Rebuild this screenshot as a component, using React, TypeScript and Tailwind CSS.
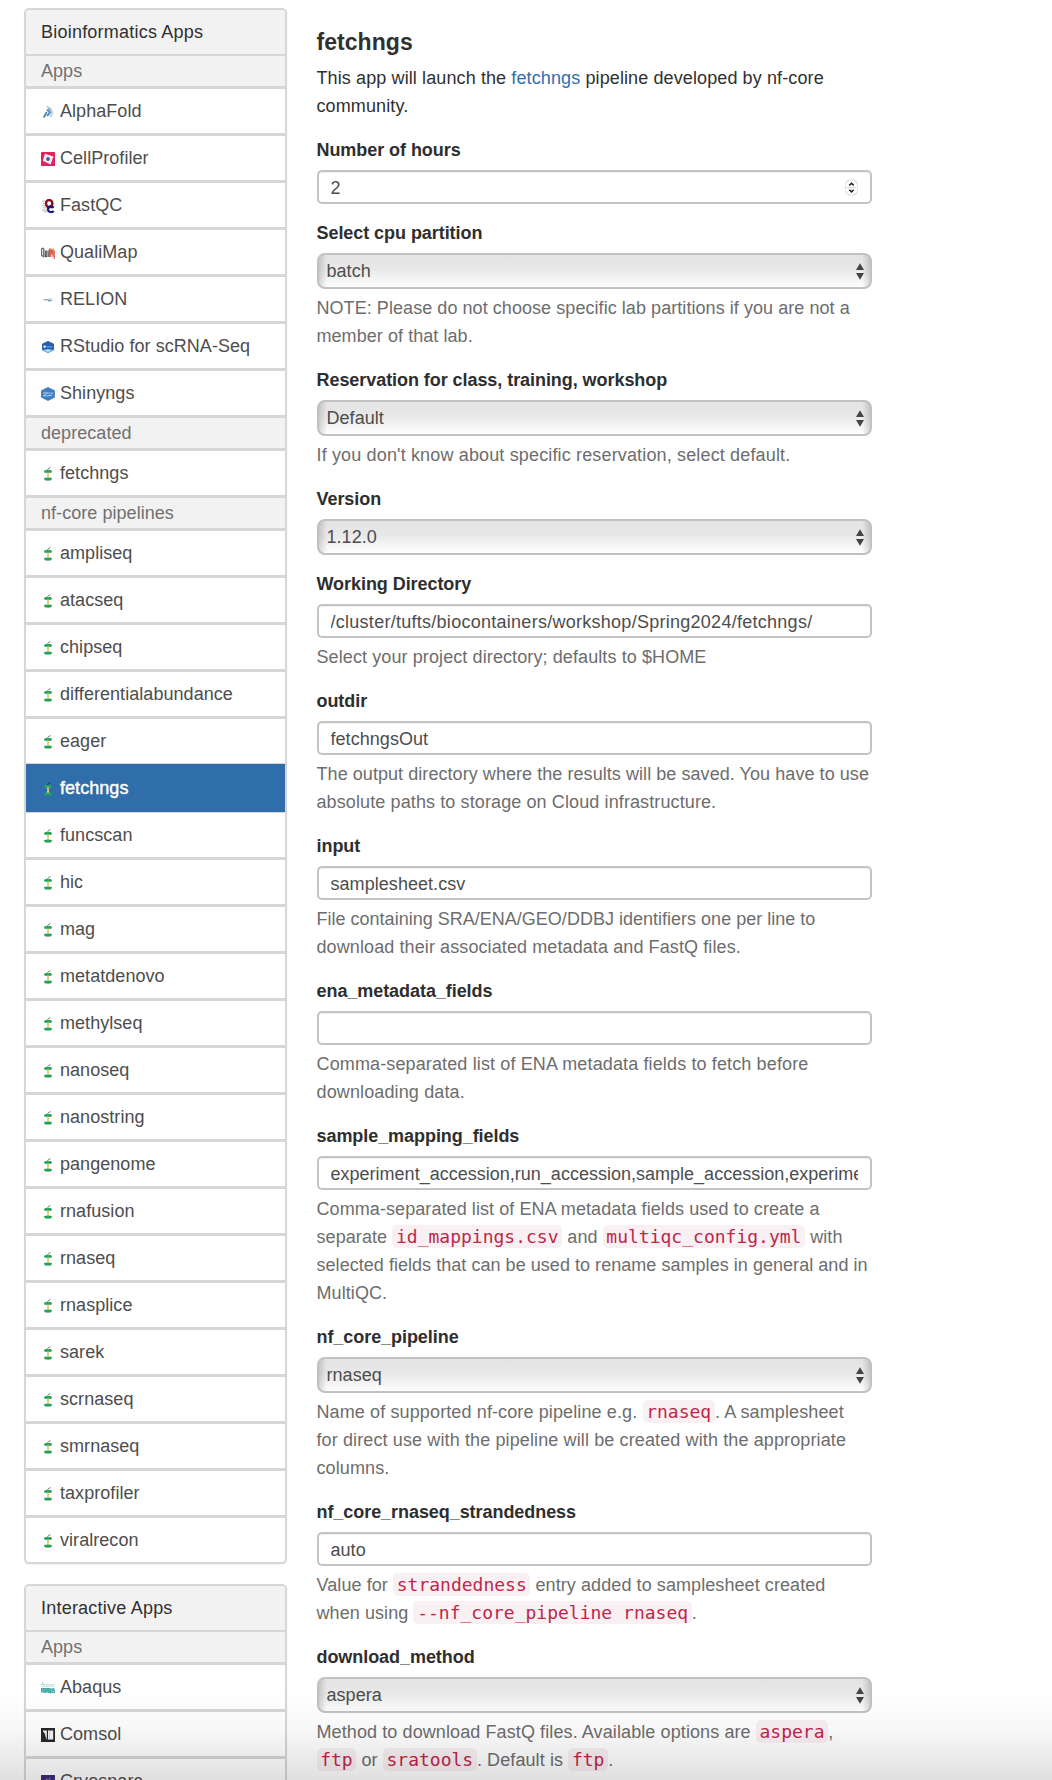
import React from "react";

type IconName =
  | "alphafold" | "cellprofiler" | "fastqc" | "qualimap" | "relion" | "rstudio"
  | "shiny" | "apple" | "abaqus" | "comsol" | "cryosparc";

function AppIcon({ name, active = false }: { name: IconName; active?: boolean }) {
  return (
    <svg viewBox="0 0 14 14" className="mt-px h-[14px] w-[14px] shrink-0">
      {name === "alphafold" && (
        <g fill="none" strokeLinecap="round">
          <path d="M6 1.5 10 4 11.5 8 9.5 11.5" stroke="#b9cfdf" strokeWidth="1.6" />
          <path d="M6.5 5 9 7.5 6.5 10.5" stroke="#5f93bd" strokeWidth="2" />
          <path d="M7.5 3.5 9.5 6" stroke="#86aeca" strokeWidth="1.4" />
          <path d="M5.5 7.5 3 12" stroke="#3f7fb2" strokeWidth="1.6" />
          <path d="M2.5 11.8 4 12.3" stroke="#9aa56a" strokeWidth="1" />
        </g>
      )}
      {name === "cellprofiler" && (
        <>
          <rect width="14" height="14" rx=".6" fill="#e0245e" />
          <path d="M4 1.8 12.4 4.4 9.6 12.4 1.8 8.8Z" fill="#f3eef4" />
          <circle cx="7" cy="7" r="1.9" fill="#5a4aa0" />
        </>
      )}
      {name === "fastqc" && (
        <g fill="none">
          <path d="M1 2.2h5M2 4.4h3M1 6.6h4M2 8.8h4M1 11h5M2.5 12.8h4" stroke="#999" strokeWidth=".7" />
          <ellipse cx="8.2" cy="4.6" rx="3.2" ry="3.6" stroke="#85131a" strokeWidth="2.4" />
          <path d="M8.6 6.4 11.6 9" stroke="#85131a" strokeWidth="1.8" />
          <path d="M12.8 8.6C10 6.6 6.6 8 7 10.6 7.3 13.2 10.8 13.8 12.8 12.2" stroke="#16168a" strokeWidth="2.2" />
        </g>
      )}
      {name === "qualimap" && (
        <g fill="none" strokeWidth="1.1">
          <path d="M.7 2.2v8M2.8 2.4v9M1 2.4h1.6M1 10h2M4.4 4.6v6.4M5.8 4.6v6.4M4.4 10.6h1.4" stroke="#555" />
          <path d="M7.2 4.5v6.5M8.4 2.4v8.6" stroke="#86675f" />
          <path d="M9.7 2.6v8.4M10.8 3.4v5M12 2.6v8.4M13.3 4.5v8.5M12.4 5h1" stroke="#d8573c" />
        </g>
      )}
      {name === "relion" && (
        <g fill="none">
          <path d="M2.5 6.7h5" stroke="#aaa" strokeWidth="1.5" />
          <path d="M7 7.6h3.5" stroke="#6f94bd" strokeWidth="1.6" />
          <path d="M7.5 6h4" stroke="#b9bfc6" strokeWidth="1" />
        </g>
      )}
      {name === "rstudio" && (
        <>
          <path d="M7 1 13 4v6.2L7 13.2 1 10.2V4Z" fill="#4aa3e6" />
          <path d="M7 1 13 4v5.4H1V4Z" fill="#2b5db0" />
          <path d="M3 10.2 7 12.2l4-2-4-1.2Z" fill="#a5dcfa" />
          <circle cx="3.6" cy="6.6" r="1.2" fill="#fff" />
          <path d="M5.6 6.8h6" stroke="#5fa2de" strokeWidth="1.3" />
        </>
      )}
      {name === "shiny" && (
        <>
          <path d="M7 0 13.9 3.6v6.8L7 14 .1 10.4V3.6Z" fill="#3f80c2" />
          <path d="M2.2 6.8 4 4.8M3.2 7.2l1.8-.2.4-2M6.4 6.8l.3-1.3M7.8 6.8l.5-1.2.9 1.1M10.2 5.6l.6 1.1 1.3-1.2M2 8.8h4.5l4.5-.6" stroke="#d5e6f5" strokeWidth=".8" fill="none" />
        </>
      )}
      {name === "apple" && (
        <>
          <path d="M6.6 3.2C6.8 1.8 7.8 1.2 9.4.7" stroke={active ? "#1f3350" : "#666"} strokeWidth="1" fill="none" />
          <path d="M3 5.1C3 3.3 4.8 2.8 7 3.3 9.2 2.8 11 3.3 11 5.1 9.8 6.4 8.6 5.8 7 6 5.4 5.8 4 6.4 3 5.1Z" fill="#27a35a" />
          <path d="M5.8 5.6h2.5L7.7 8l.7 3H5.7l.7-3Z" fill="#ecd58c" />
          <path d="M7 6.4v2.6" stroke="#a98a3c" strokeWidth=".5" />
          <path d="M3 11.3c1.2-1 2.5-.4 4-.8 1.5.4 2.8-.2 4 .8-.2 2.3-2 2.5-4 2.3-2 .2-3.8 0-4-2.3Z" fill="#27a35a" />
        </>
      )}
      {name === "abaqus" && (
        <g fill="none" stroke="#43aaa8">
          <path d="M.5 4 2 1.2M2 3.8h2M5 4h1.6M7.5 3.9h1.6M10 4h1.5M12.3 3.9h1.4" strokeWidth=".9" opacity=".75" />
          <path d="M.3 5.6h13.4" strokeWidth=".5" opacity=".5" />
          <path d="M.6 11.5V7.6h1.5v4M.6 9.6h1.5M3 7.5v4h1.3v-4ZM5.3 11.5V7.6h1.3v4M5.3 9.6h1.3M7.6 7.6v3.8h1.3V7.6ZM8.6 11l.8 1.5M9.9 7.4v4h1.3v-4M13.4 7.6h-1.2v1.8h1.2v2H12" strokeWidth="1.1" />
        </g>
      )}
      {name === "comsol" && (
        <>
          <rect width="14" height="14" fill="#282828" />
          <path d="M2 2.5h3.8v9.2C4.4 9.5 4.4 5 2 3.6Z" fill="#f5f5f5" />
          <path d="M7 2.5h5.2v9H7Z" fill="#f5f5f5" />
          <path d="M8.6 2.8v8.5" stroke="#bbb" strokeWidth=".5" />
        </>
      )}
      {name === "cryosparc" && (
        <>
          <rect width="14" height="14" fill="#3d2a78" />
          <path d="M5 4.2h1.4M8 3.4l1.2.6M6 6.2 7.6 5M9 6.5h1.2M4.6 7l1 .4" stroke="#cfc6ea" strokeWidth="1" />
        </>
      )}
    </svg>
  );
}

type Item = [label: string, icon: IconName];
type Section = { title: string; items: Item[] };

const pipelines = [
  "ampliseq", "atacseq", "chipseq", "differentialabundance", "eager", "fetchngs", "funcscan", "hic", "mag",
  "metatdenovo", "methylseq", "nanoseq", "nanostring", "pangenome", "rnafusion", "rnaseq", "rnasplice", "sarek",
  "scrnaseq", "smrnaseq", "taxprofiler", "viralrecon",
];

const bioSections: Section[] = [
  {
    title: "Apps",
    items: [
      ["AlphaFold", "alphafold"],
      ["CellProfiler", "cellprofiler"],
      ["FastQC", "fastqc"],
      ["QualiMap", "qualimap"],
      ["RELION", "relion"],
      ["RStudio for scRNA-Seq", "rstudio"],
      ["Shinyngs", "shiny"],
    ],
  },
  { title: "deprecated", items: [["fetchngs", "apple"]] },
  { title: "nf-core pipelines", items: pipelines.map((p): Item => [p, "apple"]) },
];

const interactiveSections: Section[] = [
  { title: "Apps", items: [["Abaqus", "abaqus"], ["Comsol", "comsol"], ["Cryosparc", "cryosparc"]] },
];

function Panel({ title, sections, selected }: { title: string; sections: Section[]; selected?: string }) {
  return (
    <section className="overflow-hidden rounded-[5px] border-2 border-[#d6d6d6] bg-white shadow-[0_1px_2px_rgba(0,0,0,0.06)]">
      <h2 className="h-[44px] bg-[#f2f2f2] pl-[15px] leading-[44px] tracking-[0.22px] text-[#303030]">{title}</h2>
      {sections.map((s, si) => (
        <div key={s.title}>
          <div
            className={
              "box-content h-[30px] border-[#d6d6d6] bg-[#f2f2f2] pl-[15px] leading-[30px] text-[#707070] " +
              (si === 0 ? "border-t-2" : "border-t-[3px]")
            }
          >
            {s.title}
          </div>
          {s.items.map(([label, icon]) => {
            const active = selected === `${s.title}/${label}`;
            return (
              <a
                key={label}
                className={
                  "box-content flex items-center gap-[5px] pl-[15px] leading-[44px] " +
                  (active
                    ? "relative z-10 -mb-[2px] mt-px h-[44px] border-y-2 border-[#2f6eaa] bg-[#2f6eaa] text-white [-webkit-text-stroke:0.4px_white] shadow-[0_-1px_0_#d6d6d6,0_1px_0_#d6d6d6]"
                    : "h-[44px] border-t-[3px] border-[#d6d6d6] text-[#4d4d4d]")
                }
              >
                <AppIcon name={icon} active={active} />
                {label}
              </a>
            );
          })}
        </div>
      ))}
    </section>
  );
}

type FieldProps = {
  label: string;
  help?: React.ReactNode;
  helpClass?: string;
  children: React.ReactNode;
};

function Field({ label, help, helpClass = "tracking-[0.1px]", children }: FieldProps) {
  return (
    <div className={help ? "mb-4" : "mb-[15px]"}>
      <label className="mb-[6px] block font-bold leading-[28px] tracking-[-0.06px] text-[#2e2e2e]">{label}</label>
      {children}
      {help && <p className={"mt-[5px] whitespace-nowrap leading-[28px] text-[#6d6d6d] " + helpClass}>{help}</p>}
    </div>
  );
}

type TextBoxProps = { value: string; spinner?: boolean; textClass?: string };

function TextBox({ value, spinner = false, textClass = "tracking-[0.05px]" }: TextBoxProps) {
  return (
    <div className="ml-[0.5px] flex h-[34px] w-[555px] items-center rounded-[5px] border-2 border-[#c3c3c3] bg-white pl-[11.5px] pr-[12px] leading-[30px] text-[#4d4d4d] shadow-[inset_0_1px_1px_rgba(0,0,0,0.07)]">
      <span className={"min-w-0 flex-1 overflow-hidden whitespace-nowrap pt-px " + textClass}>{value}</span>
      {spinner && (
        <span className="mr-[1px] flex h-[15px] w-[11px] items-center justify-center rounded-[5px] bg-white shadow-[0_0_1.5px_rgba(0,0,0,0.5)]">
          <svg viewBox="0 0 11 15" className="h-[15px] w-[11px]" fill="none" stroke="#222" strokeWidth="1.5">
            <path d="M3.3 5.4 5.5 3.3l2.2 2.1M3.3 9.8l2.2 2.1 2.2-2.1" />
            <path d="M.5 7.5h10" stroke="#ccc" strokeWidth=".7" />
          </svg>
        </span>
      )}
    </div>
  );
}

function SelectBox({ value }: { value: string }) {
  return (
    <div className="ml-[0.5px] flex h-[36px] w-[555px] items-center justify-between rounded-[8px] border-2 border-[#c1c1c1] bg-[linear-gradient(90deg,rgba(0,0,0,0.14),transparent_8px,transparent_calc(100%-8px),rgba(0,0,0,0.14)),linear-gradient(#e4e4e4,#e8e8e8_45%,#fefefe)] pl-[7.5px] pr-[6px] leading-[32px] text-[#4d4d4d]">
      <span className="tracking-[0.05px]">{value}</span>
      <svg viewBox="0 0 8 17" className="h-[17px] w-[8px]" fill="#444">
        <path d="M4 .3 8 7H0ZM0 10h8l-4 6.7Z" />
      </svg>
    </div>
  );
}

function Code({ children }: { children: React.ReactNode }) {
  return (
    <code className="rounded-[5px] bg-[#f8f0f3] px-[3.7px] py-[1.2px] font-['DejaVu_Sans_Mono',monospace] text-[18px] leading-none tracking-normal text-[#bf2649]">
      {children}
    </code>
  );
}

export default function App() {
  return (
    <div className="relative h-[1780px] w-[1052px] overflow-hidden bg-white font-['Liberation_Sans',Arial,sans-serif] text-[18px] tracking-[0.05px]">
      <div className="flex items-start">
        <nav className="ml-6 mt-2 flex w-[263px] shrink-0 flex-col gap-5">
          <Panel title="Bioinformatics Apps" sections={bioSections} selected="nf-core pipelines/fetchngs" />
          <Panel title="Interactive Apps" sections={interactiveSections} />
        </nav>
        <main className="ml-[29.5px] w-[556px] pt-[28px]">
          <h1 className="h-[36px] text-[23px] font-bold leading-[28px] text-[#303030]">fetchngs</h1>
          <p className="mb-4 whitespace-nowrap leading-[28px] tracking-[0.11px] text-[#303030]">
            This app will launch the <a className="text-[#2f6fb3]">fetchngs</a> pipeline developed by nf-core
            <br />
            community.
          </p>
          <Field label="Number of hours">
            <TextBox value="2" spinner />
          </Field>
          <Field
            label="Select cpu partition"
            helpClass="tracking-[0.06px]"
            help={<>NOTE: Please do not choose specific lab partitions if you are not a<br />member of that lab.</>}
          >
            <SelectBox value="batch" />
          </Field>
          <Field
            label="Reservation for class, training, workshop"
            helpClass="tracking-[0.15px]"
            help="If you don't know about specific reservation, select default."
          >
            <SelectBox value="Default" />
          </Field>
          <Field label="Version">
            <SelectBox value="1.12.0" />
          </Field>
          <Field label="Working Directory" help="Select your project directory; defaults to $HOME">
            <TextBox value="/cluster/tufts/biocontainers/workshop/Spring2024/fetchngs/" textClass="tracking-[0.27px]" />
          </Field>
          <Field
            label="outdir"
            helpClass="tracking-[0.06px]"
            help={
              <>
                The output directory where the results will be saved. You have to use<br />
                <span className="tracking-[0.11px]">absolute paths to storage on Cloud infrastructure.</span>
              </>
            }
          >
            <TextBox value="fetchngsOut" />
          </Field>
          <Field
            label="input"
            helpClass="tracking-[0.01px]"
            help={
              <>
                File containing SRA/ENA/GEO/DDBJ identifiers one per line to<br />
                <span className="tracking-[0.1px]">download their associated metadata and FastQ files.</span>
              </>
            }
          >
            <TextBox value="samplesheet.csv" />
          </Field>
          <Field
            label="ena_metadata_fields"
            helpClass="tracking-[0.13px]"
            help={<>Comma-separated list of ENA metadata fields to fetch before<br />downloading data.</>}
          >
            <TextBox value="" />
          </Field>
          <Field
            label="sample_mapping_fields"
            helpClass="tracking-[0.08px]"
            help={
              <>
                Comma-separated list of ENA metadata fields used to create a<br />
                separate <Code>id_mappings.csv</Code> and <Code>multiqc_config.yml</Code> with<br />
                <span className="tracking-[0.04px]">selected fields that can be used to rename samples in general and in</span>
                <br />
                MultiQC.
              </>
            }
          >
            <TextBox
              value="experiment_accession,run_accession,sample_accession,experiment_alias"
              textClass="tracking-[0.01px]"
            />
          </Field>
          <Field
            label="nf_core_pipeline"
            helpClass="tracking-[0.12px]"
            help={
              <>
                Name of supported nf-core pipeline e.g. <Code>rnaseq</Code>. A samplesheet<br />
                for direct use with the pipeline will be created with the appropriate<br />
                columns.
              </>
            }
          >
            <SelectBox value="rnaseq" />
          </Field>
          <Field
            label="nf_core_rnaseq_strandedness"
            helpClass="tracking-[0.08px]"
            help={
              <>
                Value for <Code>strandedness</Code> entry added to samplesheet created<br />
                when using <Code>--nf_core_pipeline rnaseq</Code>.
              </>
            }
          >
            <TextBox value="auto" />
          </Field>
          <Field
            label="download_method"
            help={
              <>
                Method to download FastQ files. Available options are <Code>aspera</Code>,<br />
                <Code>ftp</Code> or <Code>sratools</Code>. Default is <Code>ftp</Code>.
              </>
            }
          >
            <SelectBox value="aspera" />
          </Field>
        </main>
      </div>
      <div className="pointer-events-none absolute inset-x-0 bottom-0 z-20 h-[90px] bg-[linear-gradient(transparent,rgba(0,0,0,0.03)_45%,rgba(0,0,0,0.12))]" />
    </div>
  );
}
